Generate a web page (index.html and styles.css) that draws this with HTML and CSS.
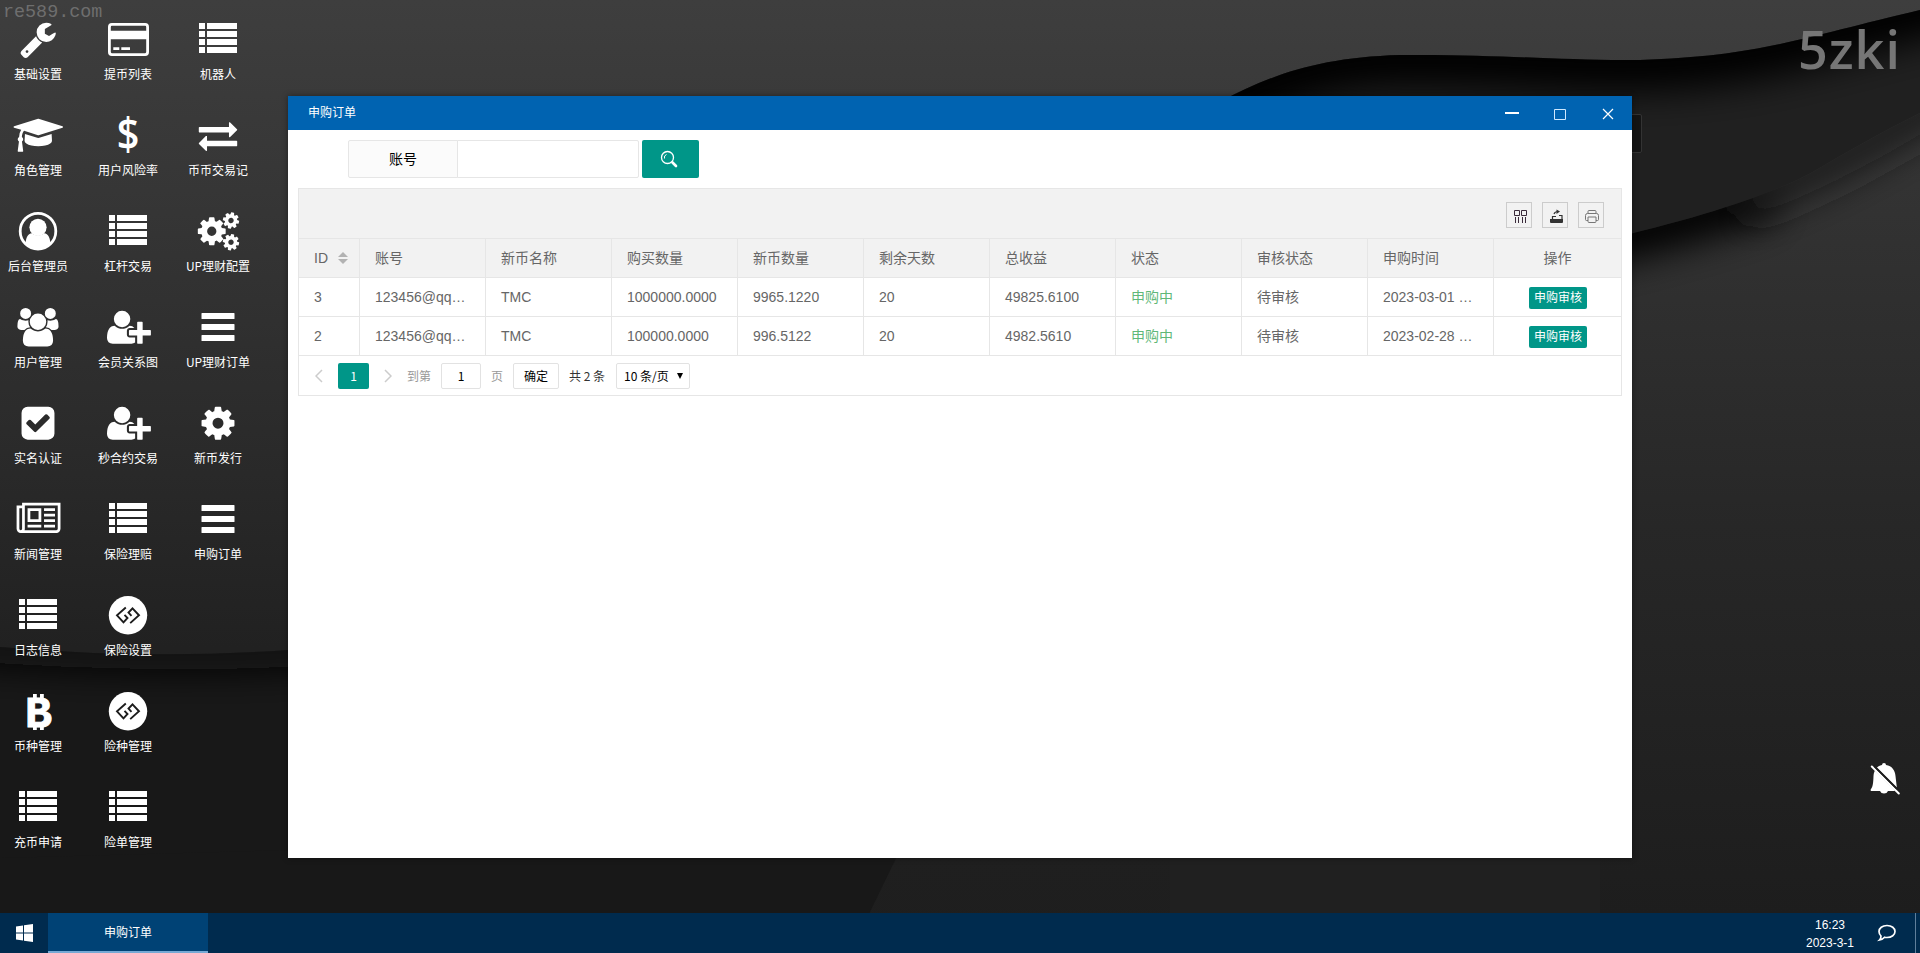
FILE: index.html
```
<!DOCTYPE html>
<html lang="zh-CN">
<head>
    <meta charset="UTF-8">
    <meta name="viewport" content="width=device-width, initial-scale=1.0">
    <title>申购订单</title>
    <link rel="stylesheet" href="styles.css">
</head>
<body>
    <!-- icon sprite -->
    <svg class="sprite">
        <symbol id="i-wrench" viewBox="0 0 50 40"><path transform="translate(5.8 1) scale(.02143)" d="M448 1472q0-26-19-45t-45-19-45 19-19 45 19 45 45 19 45-19 19-45zm644-420l-682 682q-37 37-90 37-52 0-91-37l-106-108q-38-36-38-90 0-53 38-91l681-681q39 98 114.5 173.5t173.5 114.5zm634-435q0 39-23 106-47 134-164.5 217.5t-258.5 83.5q-185 0-316.5-131.5t-131.5-316.5 131.5-316.5 316.5-131.5q58 0 121.5 16.5t107.5 46.5q16 11 16 28t-16 28l-293 169v224l193 107q5-3 79-48.5t135.5-81 70.5-35.5q15 0 23.5 10t8.5 25z"/></symbol>
        <symbol id="i-grad" viewBox="0 0 50 40"><path transform="translate(.6 1) scale(.02143)" d="M1774 836l18 316q4 69-82 128t-235 93.500-323 34.500-323-34.500-235-93.500-82-128l18-316 574 181q22 7 48 7t48-7zm530-324q0 23-22 31l-1120 352q-4 1-10 1t-10-1l-652-206q-43 34-71 111.500t-34 178.500q63 36 63 109 0 69-58 107l58 433q2 14-8 25-9 11-24 11h-192q-15 0-24-11-10-11-8-25l58-433q-58-38-58-107 0-73 65-111 11-207 98-330l-333-104q-22-8-22-31t22-31l1120-352q4-1 10-1t10 1l1120 352q22 8 22 31z"/></symbol>
        <symbol id="i-user" viewBox="0 0 50 40"><circle cx="25" cy="20.200" r="17.800" fill="none" stroke="#fff" stroke-width="2.800"/><circle cx="25" cy="16.300" r="8.600"/><path d="M12.500 33c.5-6 2-10.500 6.500-10.700 3.500 3 8.500 3 12 0 4.500.2 6 4.700 6.500 10.700-7 7-18 7-25 0z"/></symbol>
        <symbol id="i-users" viewBox="0 0 50 40"><path transform="translate(4.400 1) scale(.02143)" d="M593 896q-162 5-265 128h-134q-82 0-138-40.500t-56-118.500q0-353 124-353 6 0 43.500 21t97.500 42.500 119 21.500q67 0 133-23-5 37-5 66 0 139 81 256zm1071 637q0 120-73 189.500t-194 69.500h-874q-121 0-194-69.500t-73-189.500q0-53 3.500-103.500t14-109 26.500-108.500 43-97.500 62-81 85.500-53.500 111.500-20q10 0 43 21.500t73 48 107 48 135 21.500 135-21.500 107-48 73-48 43-21.500q61 0 111.500 20t85.500 53.500 62 81 43 97.500 26.500 108.500 14 109 3.500 103.500zm-1024-1277q0 106-75 181t-181 75-181-75-75-181 75-181 181-75 181 75 75 181zm704 384q0 159-112.500 271.500t-271.500 112.500-271.500-112.500-112.500-271.500 112.500-271.500 271.500-112.500 271.500 112.500 112.500 271.500zm576 225q0 78-56 118.500t-138 40.500h-134q-103-123-265-128 81-117 81-256 0-29-5-66 66 23 133 23 59 0 119-21.500t97.500-42.500 43.500-21q124 0 124 353zm-128-609q0 106-75 181t-181 75-181-75-75-181 75-181 181-75 181 75 75 181z"/></symbol>
        <symbol id="i-check" viewBox="0 0 50 40"><path transform="translate(5.800 1) scale(.02143)" d="M813 1299l614-614q19-19 19-45t-19-45l-102-102q-19-19-45-19t-45 19l-467 467-211-211q-19-19-45-19t-45 19l-102 102q-19 19-19 45t19 45l358 358q19 19 45 19t45-19zm851-883v960q0 119-84.500 203.500t-203.500 84.500h-960q-119 0-203.500-84.500t-84.500-203.500v-960q0-119 84.500-203.500t203.500-84.500h960q119 0 203.500 84.500t84.500 203.500z"/></symbol>
        <symbol id="i-news" viewBox="0 0 50 40"><path transform="translate(3.600 1) scale(.02143)" d="M1024 512h-384v384h384v-384zm128 640v128h-640v-128h640zm0-768v640h-640v-640h640zm640 768v128h-512v-128h512zm0-256v128h-512v-128h512zm0-256v128h-512v-128h512zm0-256v128h-512v-128h512zm-1536 960v-960h-128v960q0 26 19 45t45 19 45-19 19-45zm1664 0v-1088h-1536v1088q0 33-11 64h1483q26 0 45-19t19-45zm128-1216v1216q0 80-56 136t-136 56h-1664q-80 0-136-56t-56-136v-1088h256v-128h1792z"/></symbol>
        <symbol id="i-list" viewBox="0 0 50 40"><path d="M6 4h6v6H6zM14 4h30v6H14zM6 12h6v6H6zM14 12h30v6H14zM6 20h6v6H6zM14 20h30v6H14zM6 28h6v6H6zM14 28h30v6H14z"/></symbol>
        <symbol id="i-bars" viewBox="0 0 50 40"><path d="M9 6h32q.5 0 .5.500v5q0 .5-.5.500H9q-.5 0-.5-.500v-5Q8.500 6 9 6zM9 17h32q.5 0 .5.500v5q0 .5-.5.500H9q-.5 0-.5-.500v-5q0-.500.500-.500zM9 28h32q.500 0 .500.500v5q0 .500-.500.500H9q-.500 0-.500-.500v-5q0-.500.500-.500z"/></symbol>
        <symbol id="i-card" viewBox="0 0 50 40"><rect x="6.400" y="5.400" width="38.200" height="30.200" rx="2.500" fill="none" stroke="#fff" stroke-width="2.800"/><path d="M6 11.700h39v8.600H6zM10.300 28.300h6V31h-6zM18.300 28.300H27V31h-8.700z"/></symbol>
        <symbol id="i-plus" viewBox="0 0 50 40"><path transform="translate(4 1) scale(.02143)" d="M704 896q-159 0-271.500-112.500t-112.500-271.500 112.500-271.500 271.500-112.500 271.500 112.500 112.500 271.500-112.500 271.500-271.500 112.500zm960 128h352q13 0 22.500 9.500t9.500 22.500v192q0 13-9.500 22.500t-22.500 9.500h-352v352q0 13-9.500 22.500t-22.500 9.500h-192q-13 0-22.500-9.500t-9.500-22.500v-352h-352q-13 0-22.500-9.500t-9.500-22.500v-192q0-13 9.500-22.500t22.500-9.500h352v-352q0-13 9.500-22.500t22.500-9.500h192q13 0 22.500 9.500t9.500 22.500v352zm-736 224q0 52 38 90t90 38h256v238q-68 50-171 50h-874q-121 0-194-69t-73-190q0-53 3.500-103.500t14-109 26.500-108.500 43-97.500 62-81 85.500-53.500 111.500-20q19 0 39 17 79 61 154.500 91.500t164.500 30.500 164.500-30.500 154.500-91.500q20-17 39-17 132 0 217 96h-223q-52 0-90 38t-38 90v192z"/></symbol>
        <symbol id="i-exchange" viewBox="0 0 50 40"><path transform="translate(5.800 1) scale(.02143)" d="M1792 1184v192q0 13-9.500 22.500t-22.500 9.500h-1376v192q0 13-9.500 22.500t-22.500 9.500q-12 0-24-10l-319-320q-9-9-9-22 0-14 9-23l320-320q9-9 23-9 13 0 22.500 9.500t9.500 22.500v192h1376q13 0 22.500 9.500t9.500 22.500zm0-544q0 14-9 23l-320 320q-9 9-23 9-13 0-22.500-9.500t-9.500-22.500v-192h-1376q-13 0-22.500-9.500t-9.500-22.500v-192q0-13 9.500-22.500t22.500-9.500h1376v-192q0-14 9-23t23-9q12 0 24 10l319 319q9 9 9 23z"/></symbol>
        <symbol id="i-cogpath" viewBox="0 0 1792 1792"><path d="M1152 896q0-106-75-181t-181-75-181 75-75 181 75 181 181 75 181-75 75-181zm512-109v222q0 12-8 23t-20 13l-185 28q-19 54-39 91 35 50 107 138 10 12 10 25t-9 23q-27 37-99 108t-94 71q-12 0-26-9l-138-108q-44 23-91 38-16 136-29 186-7 28-36 28h-222q-14 0-24.500-8.500t-11.500-21.500l-28-184q-49-16-90-37l-141 107q-10 9-25 9-14 0-25-11-126-114-165-168-7-10-7-23 0-12 8-23 15-21 51-66.500t54-70.500q-27-50-41-99l-183-27q-13-2-21-12.500t-8-23.500v-222q0-12 8-23t19-13l186-28q14-46 39-92-40-57-107-138-10-12-10-24 0-10 9-23 26-36 98.500-107.500t94.500-71.500q13 0 26 10l138 107q44-23 91-38 16-136 29-186 7-28 36-28h222q14 0 24.500 8.500t11.500 21.500l28 184q49 16 90 37l142-107q9-9 24-9 13 0 25 10 129 119 165 170 7 8 7 22 0 12-8 23-15 21-51 66.500t-54 70.500q26 50 41 98l183 28q13 2 21 12.500t8 23.500z"/></symbol>
        <symbol id="i-cog" viewBox="0 0 50 40"><use href="#i-cogpath" x="5.800" y="1" width="38.400" height="38.400"/></symbol>
        <symbol id="i-cogs" viewBox="0 0 50 40"><use href="#i-cogpath" x="2.500" y="4" width="32.500" height="32.500"/><use href="#i-cogpath" x="28.500" y="0" width="19" height="19" transform="rotate(12 38 9.500)"/><use href="#i-cogpath" x="28.500" y="21.700" width="19" height="19" transform="rotate(12 38 31.200)"/></symbol>
        <symbol id="i-gg" viewBox="0 0 50 40"><circle cx="25" cy="20.300" r="19.200"/><path d="M22.800 12.500L14 20.300l6.500 7 4-4.300-3-3.200M27.200 28.100L36 20.300l-6.500-7-4 4.300 3 3.200" fill="none" stroke="#1c1c1c" stroke-width="1.900"/></symbol>
    </svg>

    <div class="desktop">
        <svg class="wallpaper" viewBox="0 0 1920 953" preserveAspectRatio="none">
            <defs>
                <linearGradient id="base" x1="0" y1="0" x2="0" y2="1">
                    <stop offset="0" stop-color="#3e3e3e"/>
                    <stop offset=".2" stop-color="#363636"/>
                    <stop offset=".68" stop-color="#212121"/>
                    <stop offset="1" stop-color="#1e1e1e"/>
                </linearGradient>
                <linearGradient id="right" x1="0" y1="0" x2="0" y2="1">
                    <stop offset="0" stop-color="#363636"/>
                    <stop offset=".5" stop-color="#272727"/>
                    <stop offset="1" stop-color="#1c1c1c"/>
                </linearGradient>
                <filter id="soft" filterUnits="userSpaceOnUse" x="-200" y="-200" width="2400" height="1400"><feGaussianBlur stdDeviation="18"/></filter>
                <clipPath id="c1"><path d="M1170 130C1240 90 1290 58 1400 55C1500 54 1560 61 1640 60C1760 56 1800 38 1920 10V953H1170z"/></clipPath>
                <clipPath id="c2"><path d="M1600 241C1700 218 1770 195 1811 173C1850 150 1880 133 1920 113V953H1600z"/></clipPath>
                <clipPath id="c3"><path d="M0 647Q150 660 288 650V953H0z"/></clipPath>
            </defs>
            <rect width="1920" height="953" fill="url(#base)"/>
            <g clip-path="url(#c1)">
                <rect x="1170" width="750" height="953" fill="#202020"/>
                <path d="M1100 170C1240 90 1290 58 1400 55C1500 54 1560 61 1640 60C1760 56 1800 38 2020 -20" fill="none" stroke="#000" stroke-width="62" filter="url(#soft)"/>
            </g>
            <g clip-path="url(#c2)">
                <rect x="1600" y="100" width="320" height="853" fill="url(#right)"/>
                <path d="M1500 262L1600 241C1680 222 1720 208 1770 192" fill="none" stroke="#050505" stroke-width="50" filter="url(#soft)"/>
                <path d="M1740 202Q1830 172 1960 90" fill="none" stroke="#1c1c1c" stroke-width="36" filter="url(#soft)"/>
            </g>
            <g clip-path="url(#c3)">
                <rect y="640" width="288" height="313" fill="#181818"/>
                <path d="M-80 640Q150 662 380 645" fill="none" stroke="#080808" stroke-width="36" filter="url(#soft)"/>
            </g>
            <path d="M288 850H900L850 953H0V858z" fill="#181818"/>
        </svg>

        <div class="watermark">re589.com</div>
        <div class="brand">5zki</div>
        <div class="ghost"></div>
        <svg class="bell" viewBox="0 0 30 32"><path d="M14 0q2 0 2 2c6 1 9 5 9.500 11L27 26l-3 2h-6q-1 2.500-4 2.500T10 28H1q-1-1 0-2c2-2 2.300-7 2.500-13C4 7 7 3 12 2q0-2 2-2z" fill="#fff"/><path d="M3 3l26 26" stroke="#1d1d1d" stroke-width="3.500"/><path d="M1.800 3.500l27 27" stroke="#fff" stroke-width="2" stroke-linecap="round"/><path d="M4.500 3.500L27 26" stroke="#1d1d1d" stroke-width="1.600"/></svg>

        <div class="shortcuts">
            <div class="shortcut"><svg><use href="#i-wrench"/></svg><span>基础设置</span></div>
            <div class="shortcut"><svg><use href="#i-grad"/></svg><span>角色管理</span></div>
            <div class="shortcut"><svg><use href="#i-user"/></svg><span>后台管理员</span></div>
            <div class="shortcut"><svg><use href="#i-users"/></svg><span>用户管理</span></div>
            <div class="shortcut"><svg><use href="#i-check"/></svg><span>实名认证</span></div>
            <div class="shortcut"><svg><use href="#i-news"/></svg><span>新闻管理</span></div>
            <div class="shortcut"><svg><use href="#i-list"/></svg><span>日志信息</span></div>
            <div class="shortcut"><svg viewBox="0 0 50 40"><text class="coin slab" x="25.500" y="35.500">B</text><path d="M20 3h3.800v6H20zM27 3h3.800v6H27zM20 33h3.800v6H20zM27 33h3.800v6H27z"/></svg><span>币种管理</span></div>
            <div class="shortcut"><svg><use href="#i-list"/></svg><span>充币申请</span></div>
            <div class="shortcut"><svg><use href="#i-card"/></svg><span>提币列表</span></div>
            <div class="shortcut"><svg viewBox="0 0 50 40"><text class="coin" x="25" y="34.800">$</text></svg><span>用户风险率</span></div>
            <div class="shortcut"><svg><use href="#i-list"/></svg><span>杠杆交易</span></div>
            <div class="shortcut"><svg><use href="#i-plus"/></svg><span>会员关系图</span></div>
            <div class="shortcut"><svg><use href="#i-plus"/></svg><span>秒合约交易</span></div>
            <div class="shortcut"><svg><use href="#i-list"/></svg><span>保险理赔</span></div>
            <div class="shortcut"><svg><use href="#i-gg"/></svg><span>保险设置</span></div>
            <div class="shortcut"><svg><use href="#i-gg"/></svg><span>险种管理</span></div>
            <div class="shortcut"><svg><use href="#i-list"/></svg><span>险单管理</span></div>
            <div class="shortcut"><svg><use href="#i-list"/></svg><span>机器人</span></div>
            <div class="shortcut"><svg><use href="#i-exchange"/></svg><span>币币交易记</span></div>
            <div class="shortcut"><svg><use href="#i-cogs"/></svg><span>UP理财配置</span></div>
            <div class="shortcut"><svg><use href="#i-bars"/></svg><span>UP理财订单</span></div>
            <div class="shortcut"><svg><use href="#i-cog"/></svg><span>新币发行</span></div>
            <div class="shortcut"><svg><use href="#i-bars"/></svg><span>申购订单</span></div>
        </div>

        <div class="window">
            <div class="title-bar">
                <span class="title">申购订单</span>
                <svg class="win-btn" viewBox="0 0 48 34"><path d="M17 16h14v2H17z" fill="#fff"/></svg>
                <svg class="win-btn" viewBox="0 0 48 34"><path d="M18.500 13.500h11v10h-11z" fill="none" stroke="#cfe9ff"/></svg>
                <svg class="win-btn" viewBox="0 0 48 34"><path d="M19 13l10 10M29 13L19 23" stroke="#fff" stroke-width="1.200"/></svg>
            </div>
            <div class="window-body">
                <div class="search">
                    <label class="search-label" for="account">账号</label>
                    <input class="search-input" id="account" type="text">
                    <button class="search-btn"><svg width="18" height="18" viewBox="0 0 18 18" fill="none" stroke="#fff"><circle cx="7.500" cy="7.500" r="6" stroke-width="1.300"/><path d="M4.500 8.500a3.300 3.300 0 0 1 2-4" /><path d="M12.500 12.500l3.500 3.500" stroke-width="2.600" stroke-linecap="round"/></svg></button>
                </div>

                <div class="table-view">
                    <div class="table-tool">
                        <span class="tool-btn"><svg width="14" height="14" viewBox="0 0 14 14" fill="none" stroke="#3b2b3b"><path d="M1.500 1.500h5v5h-5zM8.500 1.500h5v5h-5zM2.500 8v6M5.500 8v6M9.500 8v6M12.500 8v6"/></svg></span>
                        <span class="tool-btn"><svg width="14" height="14" viewBox="0 0 14 14"><path d="M1 10h13v3q0 1-1 1H2q-1 0-1-1z" fill="#333"/><path d="M3.500 10V7.500H7M10 6.500h3V10M5 5q1-2.500 4-2.500" fill="none" stroke="#333" stroke-width="1.200"/><path d="M7.500.5l3.500 2-3.500 2.500z" fill="#333"/></svg></span>
                        <span class="tool-btn"><svg width="14" height="14" viewBox="0 0 14 14" fill="none" stroke="#777"><path d="M3 4.500V2.500q0-1 1-1h6q1 0 1 1v2M3 11.500H1.500q-1 0-1-1v-4q0-2 2-2h9q2 0 2 2v4q0 1-1 1H11M3 8h8v4.500q0 1-1 1H4q-1 0-1-1z"/></svg></span>
                    </div>
                    <table>
                        <thead>
                            <tr>
                                <th class="col-id">ID <span class="sort"></span></th>
                                <th>账号</th>
                                <th>新币名称</th>
                                <th>购买数量</th>
                                <th>新币数量</th>
                                <th>剩余天数</th>
                                <th>总收益</th>
                                <th>状态</th>
                                <th>审核状态</th>
                                <th>申购时间</th>
                                <th class="col-op">操作</th>
                            </tr>
                        </thead>
                        <tbody>
                            <tr>
                                <td>3</td>
                                <td>123456@qq…</td>
                                <td>TMC</td>
                                <td>1000000.0000</td>
                                <td>9965.1220</td>
                                <td>20</td>
                                <td>49825.6100</td>
                                <td class="green">申购中</td>
                                <td>待审核</td>
                                <td>2023-03-01 …</td>
                                <td class="col-op"><a class="op-btn">申购审核</a></td>
                            </tr>
                            <tr>
                                <td>2</td>
                                <td>123456@qq…</td>
                                <td>TMC</td>
                                <td>100000.0000</td>
                                <td>996.5122</td>
                                <td>20</td>
                                <td>4982.5610</td>
                                <td class="green">申购中</td>
                                <td>待审核</td>
                                <td>2023-02-28 …</td>
                                <td class="col-op"><a class="op-btn">申购审核</a></td>
                            </tr>
                        </tbody>
                    </table>
                    <div class="pager">
                        <svg class="arrow" viewBox="0 0 8 14"><path d="M7 1L1 7l6 6"/></svg>
                        <span class="current">1</span>
                        <svg class="arrow" viewBox="0 0 8 14"><path d="M1 1l6 6-6 6"/></svg>
                        <span class="muted to">到第</span>
                        <span class="box page-input">1</span>
                        <span class="muted">页</span>
                        <span class="box confirm">确定</span>
                        <span class="total">共 2 条</span>
                        <span class="box limits">10 条/页<i></i></span>
                    </div>
                </div>
            </div>
        </div>
    </div>

    <div class="taskbar">
        <div class="start"><svg width="17" height="18" viewBox="0 0 17 18" fill="#fff"><path d="M0 2.500l7-1v7H0zM8 1.300L17 0v8.500H8zM0 9.500h7v7l-7-1zM8 9.500h9V18l-9-1.300z"/></svg></div>
        <div class="task">申购订单</div>
        <div class="clock"><span>16:23</span><span>2023-3-1</span></div>
        <svg class="chat" viewBox="0 0 20 18"><path d="M10 1.500c4.700 0 8 2.600 8 6s-3.300 6-8 6q-1.300 0-2.500-.3Q5.500 15.500 2.500 16q1.500-1.500 1.500-4Q2 10 2 7.500c0-3.400 3.300-6 8-6z" fill="none" stroke="#fff" stroke-width="1.700"/></svg>
        <div class="show-desktop"></div>
    </div>
</body>
</html>
```
FILE: styles.css
```
* {
    box-sizing: border-box;
}

body {
    margin: 0;
    height: 100vh;
    display: flex;
    flex-direction: column;
    overflow: hidden;
    background: #1e1e1e;
    font-family: "Liberation Sans", "Noto Sans CJK SC", sans-serif;
    font-size: 14px;
}

.sprite {
    position: absolute;
    width: 0;
    height: 0;
}

.desktop {
    position: relative;
    flex: 1;
}

.wallpaper {
    position: absolute;
    top: 0;
    left: 0;
    width: 100vw;
    height: 100vh;
}

.watermark {
    position: absolute;
    top: 2px;
    left: 3px;
    font-family: "Liberation Mono", monospace;
    font-size: 18.4px;
    line-height: 22px;
    color: #6e6e6e;
}

.brand {
    position: absolute;
    top: 14px;
    left: 1798px;
    font-family: "Open Sans", sans-serif;
    font-weight: 600;
    font-size: 52px;
    line-height: 70px;
    letter-spacing: 1px;
    color: #767676;
}

.ghost {
    position: absolute;
    top: 114px;
    left: 1600px;
    width: 42px;
    height: 39px;
    border: 1px solid #333;
    border-radius: 2px;
    background: #141414;
}

.bell {
    position: absolute;
    top: 763px;
    left: 1870px;
    width: 30px;
    height: 32px;
}

/* desktop shortcuts */
.shortcuts {
    position: relative;
    display: inline-grid;
    grid-auto-flow: column;
    grid-template-rows: repeat(9, 96px);
    grid-auto-columns: 76px;
    column-gap: 14px;
}

.shortcut {
    display: flex;
    flex-direction: column;
    align-items: center;
    padding-top: 19px;
    color: #fff;
    font-family: "Noto Sans CJK SC", sans-serif;
    font-size: 12px;
    line-height: 20px;
    white-space: nowrap;
}

.shortcut svg {
    width: 50px;
    height: 40px;
    margin-bottom: 5px;
    fill: #fff;
    overflow: visible;
}

.coin {
    font-family: "Open Sans", sans-serif;
    font-size: 45px;
    font-weight: 600;
    text-anchor: middle;
    transform: scaleX(.88);
    transform-origin: 25px 20px;
}

.slab {
    font-family: "Liberation Mono", monospace;
    font-weight: 700;
    stroke: #fff;
    stroke-width: 1px;
    transform: none;
}

/* window */
.window {
    position: absolute;
    top: 96px;
    left: 288px;
    width: 1344px;
    height: 762px;
    background: #fff;
    box-shadow: 0 0 6px rgba(0, 0, 0, 0.4);
}

.title-bar {
    display: flex;
    height: 34px;
    background: #0063b1;
    color: #fff;
    font-family: "Noto Sans CJK SC", sans-serif;
    font-size: 12px;
    line-height: 32px;
}

.title {
    flex: 1;
    padding-left: 20px;
}

.win-btn {
    width: 48px;
    height: 34px;
}

.window-body {
    padding: 10px;
}

.search {
    display: flex;
    height: 38px;
    margin: 0 0 10px 50px;
}

.search-label {
    width: 110px;
    border: 1px solid #e6e6e6;
    border-radius: 2px 0 0 2px;
    background: #fbfbfb;
    text-align: center;
    line-height: 36px;
}

.search-input {
    width: 182px;
    margin-left: -1px;
    border: 1px solid #e6e6e6;
    border-radius: 0 2px 2px 0;
}

.search-btn {
    display: flex;
    align-items: center;
    justify-content: center;
    width: 57px;
    margin-left: 3px;
    padding: 0 3px 0 0;
    border: none;
    border-radius: 2px;
    background: #009688;
}

.table-view {
    border: 1px solid #e6e6e6;
    color: #666;
}

.table-tool {
    display: flex;
    justify-content: flex-end;
    gap: 10px;
    height: 50px;
    padding: 13px 17px 0;
    background: #f2f2f2;
    border-bottom: 1px solid #e6e6e6;
}

.tool-btn {
    display: flex;
    align-items: center;
    justify-content: center;
    width: 26px;
    height: 26px;
    padding: 1px 0 0 1px;
    border: 1px solid #ccc;
}

table {
    width: 100%;
    table-layout: fixed;
    border-collapse: separate;
    border-spacing: 0;
}

th,
td {
    width: 126px;
    height: 39px;
    padding: 0 14px 0 15px;
    border-right: 1px solid #e6e6e6;
    border-bottom: 1px solid #e6e6e6;
    font-weight: 400;
    line-height: 28px;
    text-align: left;
    white-space: nowrap;
}

th {
    background: #f2f2f2;
}

th.col-id {
    width: 61px;
    padding-right: 0;
}

th.col-op,
td.col-op {
    width: auto;
    padding: 0;
    border-right: none;
    text-align: center;
}

.sort {
    display: inline-flex;
    flex-direction: column;
    gap: 2px;
    margin: -3px 0 0 6px;
    vertical-align: middle;
}

.sort::before,
.sort::after {
    content: "";
    border: 5px solid transparent;
}

.sort::before {
    border-top: none;
    border-bottom-color: #b2b2b2;
}

.sort::after {
    border-bottom: none;
    border-top-color: #b2b2b2;
}

.green {
    color: #5fb878;
}

.op-btn {
    display: inline-block;
    height: 22px;
    margin-left: 1px;
    padding: 0 5px;
    border-radius: 2px;
    background: #009688;
    color: #fff;
    font-size: 12px;
    line-height: 22px;
    vertical-align: middle;
}

.pager {
    display: flex;
    align-items: flex-start;
    height: 39px;
    padding: 7px 0 0 16px;
    font-size: 12px;
    line-height: 26px;
    font-family: "Noto Sans CJK SC", sans-serif;
    color: #333;
}

.arrow {
    width: 8px;
    height: 14px;
    margin-top: 6px;
    fill: none;
    stroke: #ccc;
    stroke-width: 1.5;
}

.current {
    width: 31px;
    height: 26px;
    margin: 0 15px;
    border-radius: 2px;
    background: #009688;
    color: #fff;
    text-align: center;
}

.muted {
    color: #999;
}

.to {
    margin-left: 15px;
}

.box {
    height: 26px;
    border: 1px solid #e2e2e2;
    border-radius: 2px;
    line-height: 24px;
    text-align: center;
    color: #000;
}

.page-input {
    width: 40px;
    margin: 0 10px;
}

.confirm {
    width: 46px;
    margin-left: 10px;
}

.total {
    width: 37px;
    margin: 0 10px;
    white-space: nowrap;
}

.limits {
    display: flex;
    align-items: center;
    justify-content: space-between;
    width: 74px;
    padding: 0 6px 0 7px;
}

.limits i {
    border: 3.5px solid transparent;
    border-top: 6px solid #000;
    border-bottom: none;
}

/* taskbar */
.taskbar {
    position: relative;
    display: flex;
    height: 40px;
    background: #002b4e;
    color: #fff;
    font-family: "Noto Sans CJK SC", sans-serif;
    font-size: 12px;
}

.start {
    display: flex;
    align-items: center;
    justify-content: center;
    width: 48px;
}

.task {
    width: 160px;
    background: #004275;
    border-bottom: 2px solid #76a9d4;
    line-height: 38px;
    text-align: center;
}

.clock {
    display: flex;
    flex-direction: column;
    width: 60px;
    margin-left: auto;
    padding-top: 3px;
    font-family: "Liberation Sans", sans-serif;
    line-height: 18px;
    text-align: center;
}

.chat {
    width: 20px;
    height: 18px;
    margin: 11px 18px 0 17px;
}

.show-desktop {
    width: 5px;
    border-left: 1px solid #5f7f9b;
}
```
